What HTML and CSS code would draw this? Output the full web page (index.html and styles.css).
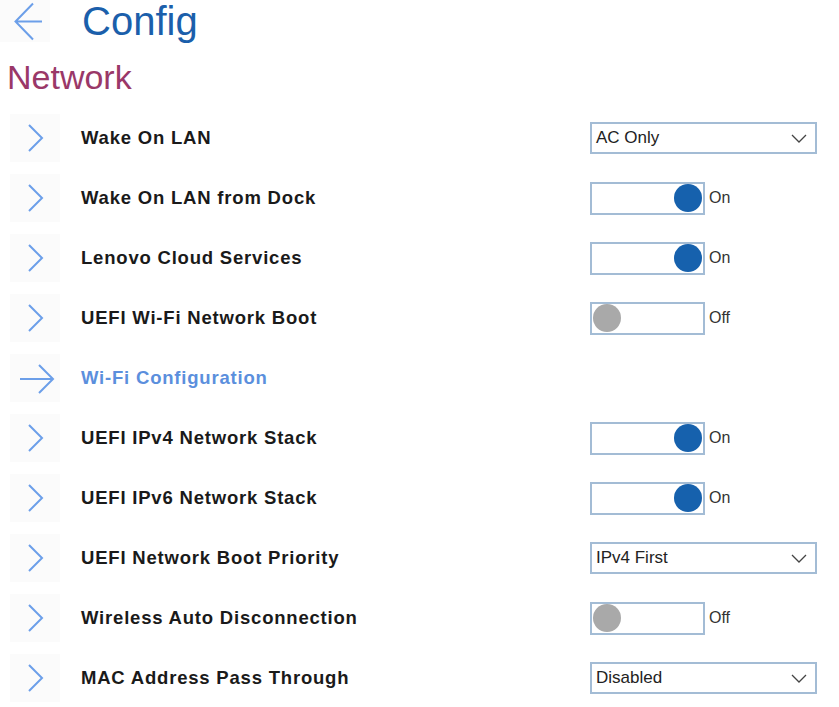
FILE: index.html
```html
<!DOCTYPE html>
<html>
<head>
<meta charset="utf-8">
<link rel="stylesheet" href="styles.css">
</head>
<body>
<header class="top">
  <div class="back">
    <svg width="50" height="42" viewBox="0 0 50 42"><path d="M42 21.5H15.5M33 3.5L15.5 21.5L33 39.5" fill="none" stroke="#6c9fe9" stroke-width="2"/></svg>
  </div>
  <h1 class="title">Config</h1>
</header>
<h2 class="section">Network</h2>
<div class="list">
  <div class="row">
    <div class="ico"><svg width="50" height="48" viewBox="0 0 50 48"><path d="M19 11L32 24L19 37" fill="none" stroke="#6c9fe9" stroke-width="2"/></svg></div>
    <div class="label">Wake On LAN</div>
    <div class="ctrl"><div class="select"><span>AC Only</span><svg width="16" height="9" viewBox="0 0 16 9"><path d="M1 1L8 8L15 1" fill="none" stroke="#444" stroke-width="1.3"/></svg></div></div>
  </div>
  <div class="row">
    <div class="ico"><svg width="50" height="48" viewBox="0 0 50 48"><path d="M19 11L32 24L19 37" fill="none" stroke="#6c9fe9" stroke-width="2"/></svg></div>
    <div class="label">Wake On LAN from Dock</div>
    <div class="ctrl"><div class="toggle on"><span class="knob"></span></div><span class="state">On</span></div>
  </div>
  <div class="row">
    <div class="ico"><svg width="50" height="48" viewBox="0 0 50 48"><path d="M19 11L32 24L19 37" fill="none" stroke="#6c9fe9" stroke-width="2"/></svg></div>
    <div class="label">Lenovo Cloud Services</div>
    <div class="ctrl"><div class="toggle on"><span class="knob"></span></div><span class="state">On</span></div>
  </div>
  <div class="row">
    <div class="ico"><svg width="50" height="48" viewBox="0 0 50 48"><path d="M19 11L32 24L19 37" fill="none" stroke="#6c9fe9" stroke-width="2"/></svg></div>
    <div class="label">UEFI Wi-Fi Network Boot</div>
    <div class="ctrl"><div class="toggle off"><span class="knob"></span></div><span class="state">Off</span></div>
  </div>
  <div class="row">
    <div class="ico"><svg width="50" height="48" viewBox="0 0 50 48"><path d="M10 25H43M29 11L43 25L29 39" fill="none" stroke="#6c9fe9" stroke-width="2"/></svg></div>
    <div class="label link">Wi-Fi Configuration</div>
  </div>
  <div class="row">
    <div class="ico"><svg width="50" height="48" viewBox="0 0 50 48"><path d="M19 11L32 24L19 37" fill="none" stroke="#6c9fe9" stroke-width="2"/></svg></div>
    <div class="label">UEFI IPv4 Network Stack</div>
    <div class="ctrl"><div class="toggle on"><span class="knob"></span></div><span class="state">On</span></div>
  </div>
  <div class="row">
    <div class="ico"><svg width="50" height="48" viewBox="0 0 50 48"><path d="M19 11L32 24L19 37" fill="none" stroke="#6c9fe9" stroke-width="2"/></svg></div>
    <div class="label">UEFI IPv6 Network Stack</div>
    <div class="ctrl"><div class="toggle on"><span class="knob"></span></div><span class="state">On</span></div>
  </div>
  <div class="row">
    <div class="ico"><svg width="50" height="48" viewBox="0 0 50 48"><path d="M19 11L32 24L19 37" fill="none" stroke="#6c9fe9" stroke-width="2"/></svg></div>
    <div class="label">UEFI Network Boot Priority</div>
    <div class="ctrl"><div class="select"><span>IPv4 First</span><svg width="16" height="9" viewBox="0 0 16 9"><path d="M1 1L8 8L15 1" fill="none" stroke="#444" stroke-width="1.3"/></svg></div></div>
  </div>
  <div class="row">
    <div class="ico"><svg width="50" height="48" viewBox="0 0 50 48"><path d="M19 11L32 24L19 37" fill="none" stroke="#6c9fe9" stroke-width="2"/></svg></div>
    <div class="label">Wireless Auto Disconnection</div>
    <div class="ctrl"><div class="toggle off"><span class="knob"></span></div><span class="state">Off</span></div>
  </div>
  <div class="row">
    <div class="ico"><svg width="50" height="48" viewBox="0 0 50 48"><path d="M19 11L32 24L19 37" fill="none" stroke="#6c9fe9" stroke-width="2"/></svg></div>
    <div class="label">MAC Address Pass Through</div>
    <div class="ctrl"><div class="select"><span>Disabled</span><svg width="16" height="9" viewBox="0 0 16 9"><path d="M1 1L8 8L15 1" fill="none" stroke="#444" stroke-width="1.3"/></svg></div></div>
  </div>
</div>
</body>
</html>
```

FILE: styles.css
```css
html, body {
  margin: 0;
  padding: 0;
  background: #ffffff;
  font-family: "Liberation Sans", Arial, sans-serif;
}

.top {
  display: flex;
  align-items: center;
  height: 42px;
}

.back {
  width: 50px;
  height: 42px;
  background: #fbfbfb;
  display: flex;
}

.title {
  margin: 0 0 0 32px;
  font-size: 40px;
  line-height: 42px;
  font-weight: normal;
  color: #1b5fab;
}

.section {
  margin: 15px 0 11px 7px;
  font-size: 34px;
  line-height: 40px;
  font-weight: normal;
  color: #9a3868;
}

.list {
  display: flex;
  flex-direction: column;
}

.row {
  display: flex;
  align-items: center;
  height: 60px;
  padding-left: 10px;
}

.ico {
  width: 50px;
  height: 48px;
  background: #fbfbfb;
  margin-right: 21px;
  display: flex;
}

.label {
  flex: 1;
  font-size: 18.5px;
  font-weight: bold;
  letter-spacing: 0.8px;
  color: #1a1a1a;
}

.label.link {
  color: #5b8fdd;
}

.ctrl {
  width: 249px;
  display: flex;
  align-items: center;
}

.select {
  box-sizing: border-box;
  width: 227px;
  height: 32px;
  border: 2px solid #a3bcd5;
  display: flex;
  align-items: center;
  justify-content: space-between;
  padding: 0 8px 0 4px;
  font-size: 17px;
  color: #222;
}

.toggle {
  box-sizing: border-box;
  width: 115px;
  height: 33px;
  border: 2px solid #a3bcd5;
  display: flex;
  align-items: center;
  padding: 0 1px;
}

.toggle.on {
  justify-content: flex-end;
}

.knob {
  width: 28px;
  height: 28px;
  border-radius: 50%;
}

.toggle.on .knob {
  background: #1661ad;
}

.toggle.off .knob {
  background: #a9a9a9;
}

.state {
  margin-left: 4px;
  font-size: 16px;
  color: #333;
}
```
